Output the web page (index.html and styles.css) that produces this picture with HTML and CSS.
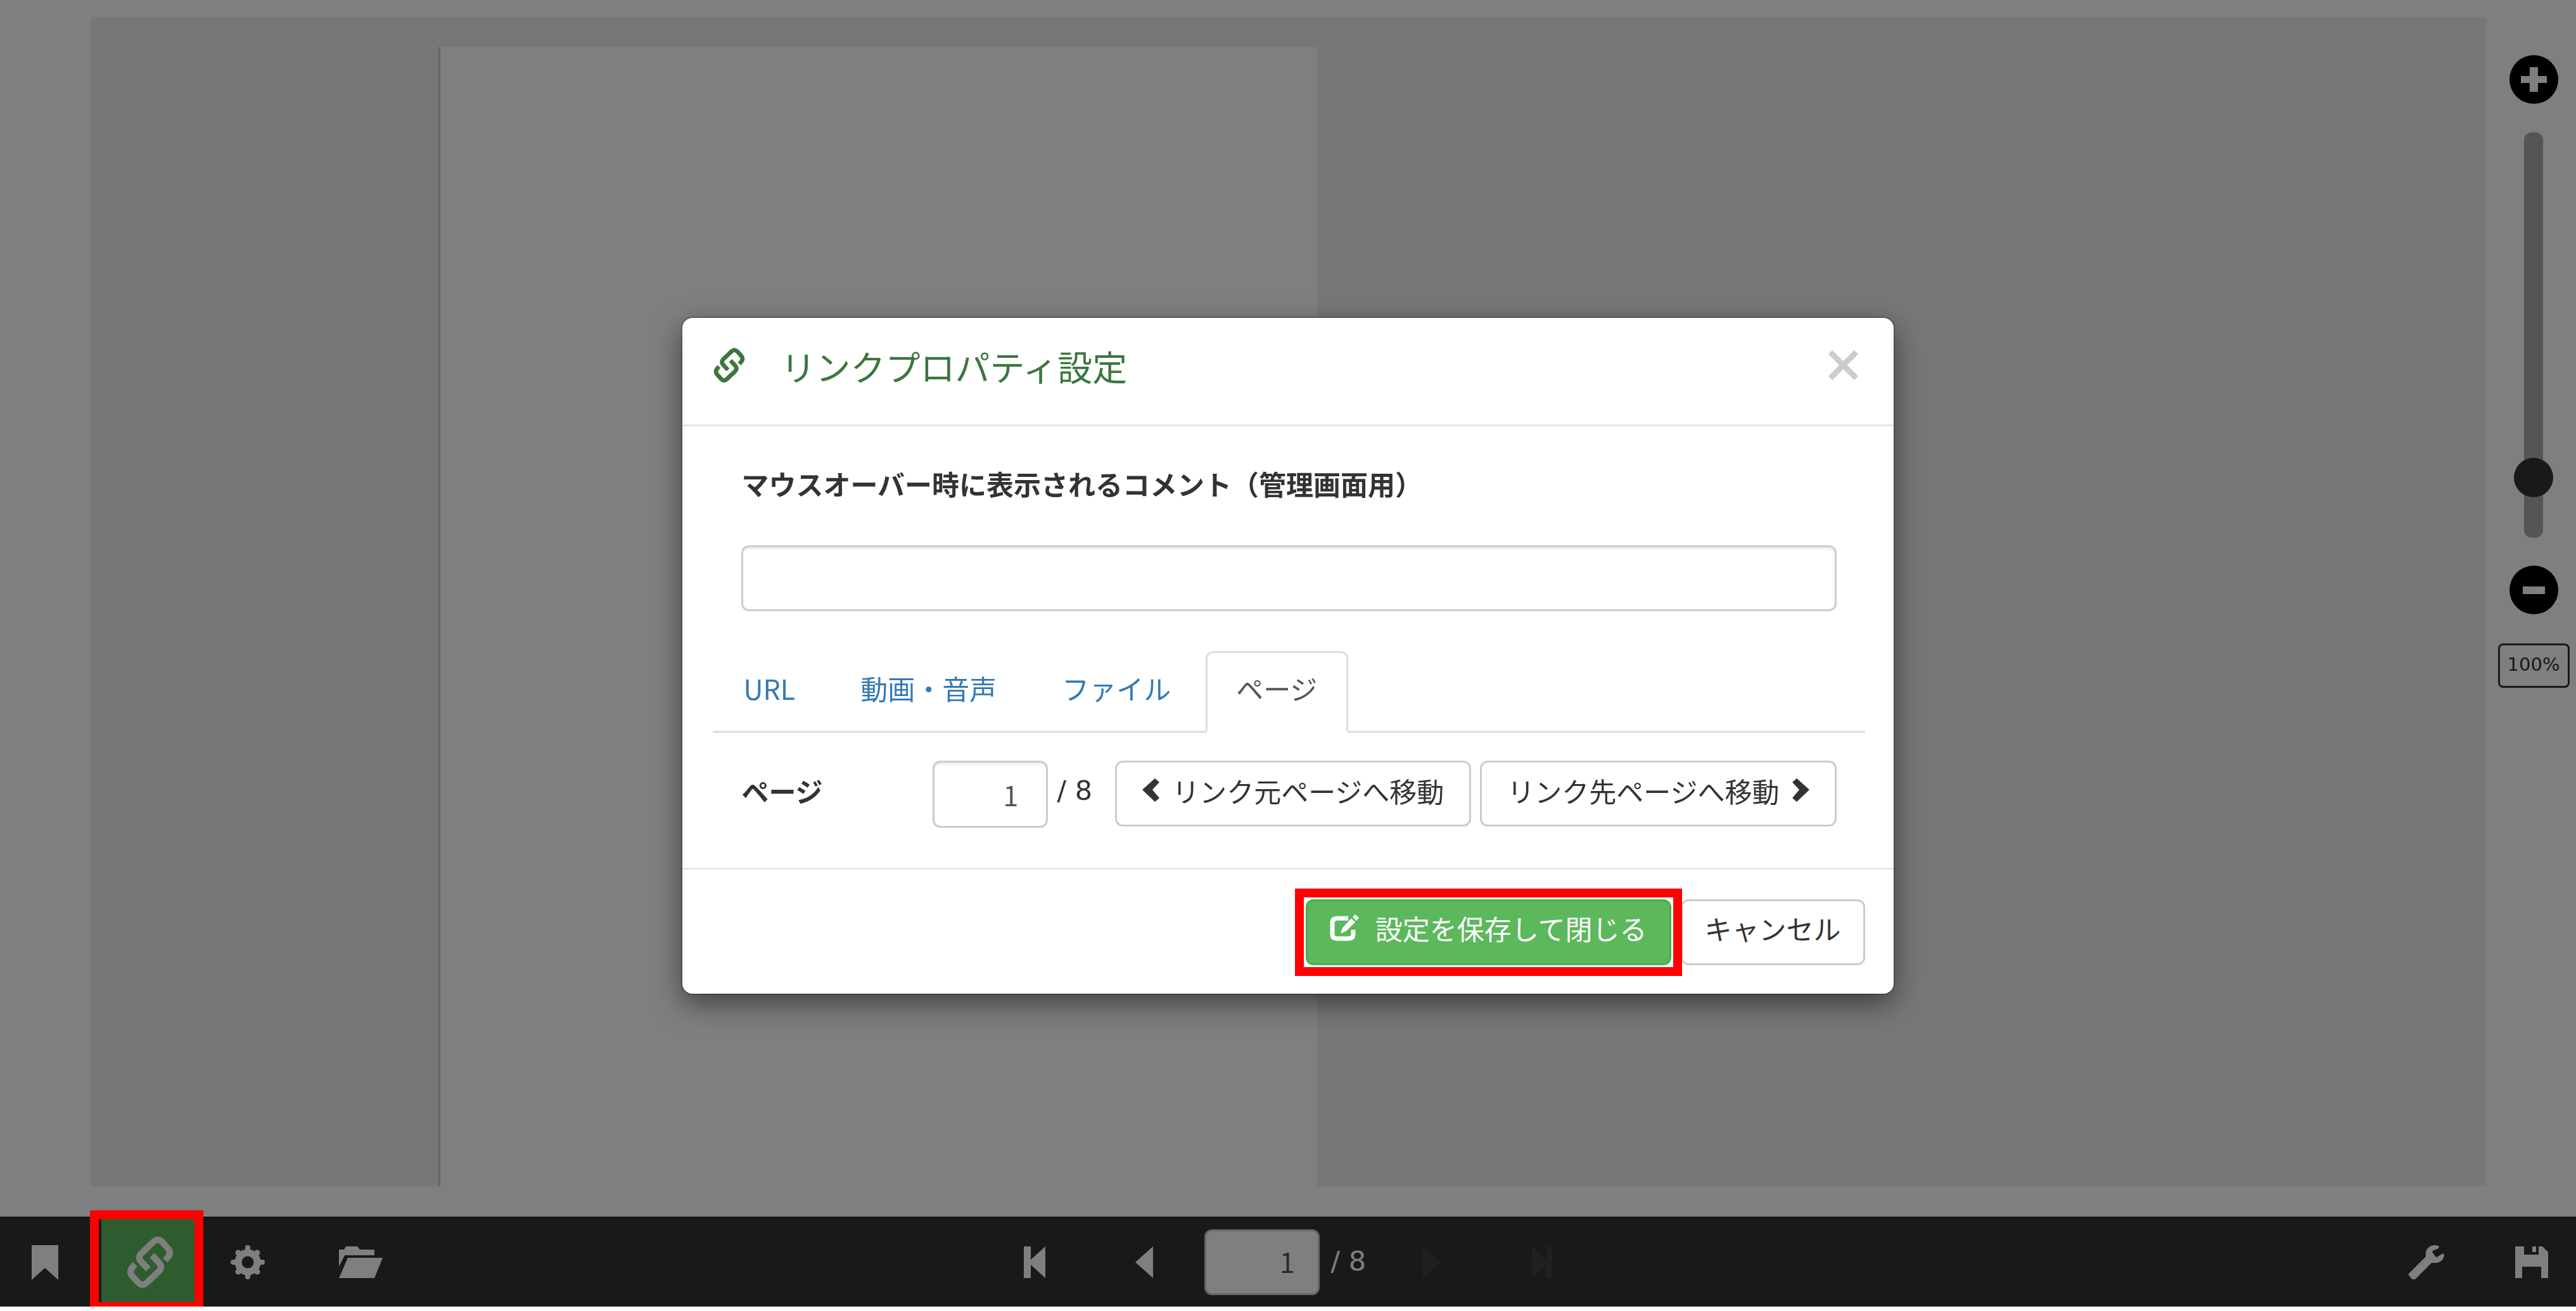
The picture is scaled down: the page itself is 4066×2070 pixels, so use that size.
FILE: index.html
```html
<!DOCTYPE html>
<html lang="ja">
  <head>
    <meta charset="utf-8">
    <title>リンクプロパティ設定</title>
    <link rel="stylesheet" href="styles.css">
  </head>
  <body>
    <!-- shared icon shapes -->
    <svg class="defs" aria-hidden="true">
      <symbol id="icon-link" viewBox="0 0 74 83">
        <g fill="none" stroke="currentColor" stroke-width="10">
          <path d="M34 52L23 40Q17 34 23 27L42 9Q49 2 56 9L65 19Q71 26 65 33L61 38"/>
          <path d="M34 52L23 40Q17 34 23 27L42 9Q49 2 56 9L65 19Q71 26 65 33L61 38" transform="rotate(180 37 41)"/>
        </g>
      </symbol>
    </svg>

    <div class="app">
      <main class="stage">
        <div class="canvas">
          <div class="page"></div>
        </div>
        <div class="zoom">
          <button class="zoom-btn" aria-label="拡大">
            <svg width="41" height="39" viewBox="0 0 41 39"><path fill="currentColor" d="M14 0H27V14H41V25H27V39H14V25H0V14H14Z"/></svg>
          </button>
          <input class="zoom-slider" type="range" min="0" max="100" value="11" aria-label="ズーム">
          <button class="zoom-btn" aria-label="縮小">
            <svg width="35" height="12" viewBox="0 0 35 12"><path fill="currentColor" d="M0 0H35V12H0Z"/></svg>
          </button>
          <button class="zoom-value">100%</button>
        </div>
      </main>

      <footer class="toolbar">
        <div class="tools">
          <button class="tool tool-bookmark" aria-label="しおり">
            <svg width="42" height="55" viewBox="0 0 42 55"><path fill="currentColor" d="M0 0H42V55L21 36L0 55Z"/></svg>
          </button>
          <button class="tool tool-link marked" aria-label="リンク">
            <svg width="74" height="83"><use href="#icon-link"/></svg>
          </button>
          <button class="tool" aria-label="設定">
            <svg width="54" height="54" viewBox="0 0 54 54">
              <g fill="none" stroke="currentColor">
                <circle cx="27" cy="27" r="15" stroke-width="11"/>
                <path stroke-width="8" stroke-linecap="round" d="M27 10V4M27 44V50M10 27H4M44 27H50"/>
                <path stroke-width="9" stroke-linecap="round" d="M15 15L12 12M39 15L42 12M15 39L12 42M39 39L42 42"/>
              </g>
            </svg>
          </button>
          <button class="tool tool-folder" aria-label="フォルダ">
            <svg width="70" height="50" viewBox="0 0 70 50"><path fill="currentColor" d="M1 5H9L12 0H30L34 5H57V14H10L1 32ZM15 18H70L57 50H1Z"/></svg>
          </button>
        </div>

        <div class="pager">
          <button class="nav-btn" aria-label="最初のページ">
            <svg width="34" height="50" viewBox="0 0 34 50"><path fill="currentColor" d="M0 0H11V21L34 0V50L11 29V50H0Z"/></svg>
          </button>
          <button class="nav-btn" aria-label="前のページ">
            <svg width="28" height="50" viewBox="0 0 28 50"><path fill="currentColor" d="M28 0V50L0 25Z"/></svg>
          </button>
          <input class="page-input" type="text" value="1" aria-label="ページ番号">
          <span class="page-total">/ 8</span>
          <button class="nav-btn" disabled aria-label="次のページ">
            <svg width="28" height="50" viewBox="0 0 28 50"><path fill="currentColor" d="M0 0V50L28 25Z"/></svg>
          </button>
          <button class="nav-btn" disabled aria-label="最後のページ">
            <svg width="34" height="50" viewBox="0 0 34 50"><path fill="currentColor" d="M34 0H25V21L2 0V50L25 29V50H34Z"/></svg>
          </button>
        </div>

        <div class="tools tools-right">
          <button class="tool-small" aria-label="ツール">
            <svg width="57" height="55" viewBox="0 0 57 55"><path fill="currentColor" d="M0 46L28 18C26 8 33 0 42 0Q46 0 49 2L48 5L39 9L38 11L44 19L47 18L55 13L57 15C56 23 51 28 44 28H37L11 54H6Z"/></svg>
          </button>
          <button class="tool-small" aria-label="保存">
            <svg width="52" height="50" viewBox="0 0 52 50"><path fill="currentColor" d="M0 0H14V13H37V0H43L52 9V50H41V32H11V50H0ZM27 0H33V9H27Z"/></svg>
          </button>
        </div>
      </footer>
      <div class="backdrop"></div>
    </div>

    <div class="modal-wrap">
      <form class="modal" role="dialog" aria-labelledby="modal-title">
        <div class="modal-header">
          <svg width="50" height="56"><use href="#icon-link"/></svg>
          <h4 id="modal-title">リンクプロパティ設定</h4>
          <button class="close" type="button" aria-label="閉じる">
            <svg width="47" height="47" viewBox="0 0 47 47"><path fill="none" stroke="currentColor" stroke-width="9" d="M3 3L44 44M44 3L3 44"/></svg>
          </button>
        </div>

        <div class="modal-body">
          <div class="comment-group">
            <label for="comment">マウスオーバー時に表示されるコメント（管理画面用）</label>
            <input id="comment" type="text" class="form-control">
          </div>

          <nav class="tabs">
            <a href="#url">URL</a>
            <a href="#media">動画・音声</a>
            <a href="#file">ファイル</a>
            <a href="#page" class="active">ページ</a>
          </nav>

          <div class="page-row">
            <label for="link-page">ページ</label>
            <input id="link-page" type="text" class="form-control page-number" value="1">
            <span class="total">/ 8</span>
            <button class="btn" type="button">
              <svg width="27" height="37" viewBox="0 0 27 37"><path fill="currentColor" d="M0 18L20 0L27 6L16 18L27 31L20 37Z"/></svg>
              リンク元ページへ移動
            </button>
            <button class="btn" type="button">
              リンク先ページへ移動
              <svg width="27" height="37" viewBox="0 0 27 37"><path fill="currentColor" d="M27 18L7 0L0 6L11 18L0 31L7 37Z"/></svg>
            </button>
          </div>
        </div>

        <div class="modal-footer">
          <button class="btn btn-success marked" type="button">
            <svg width="46" height="42" viewBox="0 0 46 42">
              <path fill="none" stroke="currentColor" stroke-width="7" d="M29 6H12Q4 6 4 13V31Q4 38 12 38H29Q37 38 37 31V24"/>
              <path fill="currentColor" d="M17 30L20 21L34 6L40 12L26 26ZM36 4L40 0L46 5L42 10Z"/>
            </svg>
            設定を保存して閉じる
          </button>
          <button class="btn" type="button">キャンセル</button>
        </div>
      </form>
    </div>
  </body>
</html>
```

FILE: styles.css
```css
* {
  box-sizing: border-box;
}
body {
  margin: 0;
  background-color: #fff;
  color: #333;
  font-family: "Noto Sans CJK JP", sans-serif;
  font-size: 43px;
  line-height: 60px;
}
button,
input {
  font: inherit;
  color: inherit;
}
button {
  display: flex;
  align-items: center;
  justify-content: center;
  padding: 0;
  border: none;
  background: none;
  cursor: pointer;
}
svg {
  display: block;
  flex: none;
}
.defs {
  position: absolute;
  width: 0;
  height: 0;
}

/* viewer */
.app {
  position: relative;
  display: flex;
  flex-direction: column;
  min-height: calc(100vh - 7px);
}
.stage {
  flex: 1;
  display: grid;
  grid-template-columns: 1fr 142px;
  padding: 27px 0 48px 144px;
}
.canvas {
  display: flex;
  padding-top: 47px;
  background-color: #eee;
}
.page {
  width: 36.7%;
  margin-left: 14.5%;
  background-color: #fff;
  border-left: 3px solid #ccc;
}
.zoom {
  display: flex;
  flex-direction: column;
  align-items: center;
  padding: 60px 0 0 8px;
}
.zoom-btn {
  width: 77px;
  height: 77px;
  border-radius: 50%;
  background-color: #000;
  color: #fff;
}
.zoom-slider {
  appearance: none;
  writing-mode: vertical-lr;
  direction: rtl;
  width: 62px;
  height: 640px;
  margin: 45px 0 44px;
  background: none;
}
.zoom-slider::-webkit-slider-runnable-track {
  width: 30px;
  height: 100%;
  border-radius: 12px;
  background-color: #aaa;
}
.zoom-slider::-webkit-slider-thumb {
  appearance: none;
  width: 62px;
  height: 62px;
  margin-left: -16px;
  border-radius: 50%;
  background-color: #333;
}
.zoom-value {
  width: 113px;
  height: 70px;
  margin-top: 46px;
  padding-bottom: 4px;
  border: 3px solid #333;
  border-radius: 8px;
  font-family: "DejaVu Sans", sans-serif;
  font-size: 29px;
}

/* bottom bar */
.toolbar {
  display: grid;
  grid-template-columns: 1fr auto 1fr;
  height: 142px;
  background-color: #333;
  border-top: 2px solid #222;
  color: #fff;
}
.tools,
.pager {
  display: flex;
  align-items: stretch;
}
.tool {
  width: 154px;
}
.tool-bookmark {
  width: 142px;
}
.tool-link {
  margin-left: 18px;
  background-color: #5cb85c;
}
.tool-folder {
  margin-left: 24px;
}
.tools-right {
  justify-content: flex-end;
  gap: 27px;
}
.tool-small {
  width: 140px;
}
.pager {
  align-items: center;
}
.nav-btn {
  width: 173px;
  height: 100%;
}
.nav-btn:disabled {
  color: #404040;
}
.page-input {
  width: 182px;
  height: 104px;
  margin: 0 18px 0 8px;
  padding: 0 36px 4px 8px;
  border: 3px solid #ccc;
  border-radius: 12px;
  background-color: #fff;
  color: #555;
  text-align: right;
}
.page-total {
  width: 73px;
  padding-bottom: 4px;
  white-space: nowrap;
}
.page-total,
.total {
  font-family: "DejaVu Sans", sans-serif;
  font-weight: normal;
}
.backdrop {
  position: absolute;
  inset: 0;
  z-index: 1;
  background-color: rgba(0, 0, 0, 0.5);
}

/* red frame round the controls to press */
.marked {
  position: relative;
}
.marked::after {
  content: "";
  position: absolute;
  inset: -20px -20px;
  z-index: 3;
  border: 14px solid #f00;
}
.tool-link::after {
  inset: -12px -7px -7px -18px;
}

/* dialog */
.modal-wrap {
  position: fixed;
  inset: 0;
  z-index: 2;
  display: flex;
  align-items: center;
  justify-content: center;
}
.modal {
  width: 47%;
  border-radius: 16px;
  background-color: #fff;
  box-shadow: 0 0 0 2px rgba(0, 0, 0, 0.2), 0 15px 45px rgba(0, 0, 0, 0.5);
}
.modal-header {
  display: flex;
  align-items: center;
  padding: 45px 56px 63px 49px;
  border-bottom: 3px solid #e5e5e5;
  color: #3c763d;
}
.modal-header h4 {
  flex: 1;
  margin: 0 0 0 56px;
  font-size: 55px;
  font-weight: normal;
}
.close {
  color: #ccc;
}
.modal-body {
  padding: 60px 45px 63px 48px;
}
.modal-body label {
  font-weight: bold;
}
.comment-group {
  padding: 0 45px;
}
.comment-group label {
  display: block;
  margin-bottom: 68px;
}
.form-control {
  width: 100%;
  height: 104px;
  padding: 0 36px;
  border: 3px solid #ccc;
  border-radius: 12px;
  background-color: #fff;
  box-shadow: inset 0 3px 3px rgba(0, 0, 0, 0.08);
  color: #555;
}
.tabs {
  display: flex;
  gap: 6px;
  margin-top: 63px;
  border-bottom: 3px solid #ddd;
}
.tabs a {
  margin-bottom: -3px;
  padding: 25px 46px 38px 45px;
  border: 3px solid transparent;
  border-radius: 12px 12px 0 0;
  color: #337ab7;
  text-decoration: none;
}
.tabs a.active {
  border-color: #ddd;
  border-bottom-color: #fff;
  background-color: #fff;
  color: #555;
}
.page-row {
  display: flex;
  align-items: flex-start;
  gap: 14px;
  margin-top: 44px;
  padding: 0 45px;
}
.page-row label {
  width: 288px;
  padding-top: 17px;
}
.page-row .page-number {
  width: 182px;
  height: 106px;
  padding-right: 44px;
  text-align: right;
}
.total {
  flex: 1;
  padding-top: 17px;
  white-space: nowrap;
}
.btn {
  gap: 20px;
  padding: 14px 40px 24px;
  border: 3px solid #ccc;
  border-radius: 12px;
  background-color: #fff;
  white-space: nowrap;
}
.modal-footer {
  display: flex;
  justify-content: flex-end;
  gap: 15px;
  padding: 47px 45px 45px;
  border-top: 3px solid #e5e5e5;
}
.modal-footer .btn {
  padding: 12px 35px 26px;
}
.modal-footer .btn-success {
  gap: 26px;
  border-color: #4cae4c;
  background-color: #5cb85c;
  color: #fff;
}
```
